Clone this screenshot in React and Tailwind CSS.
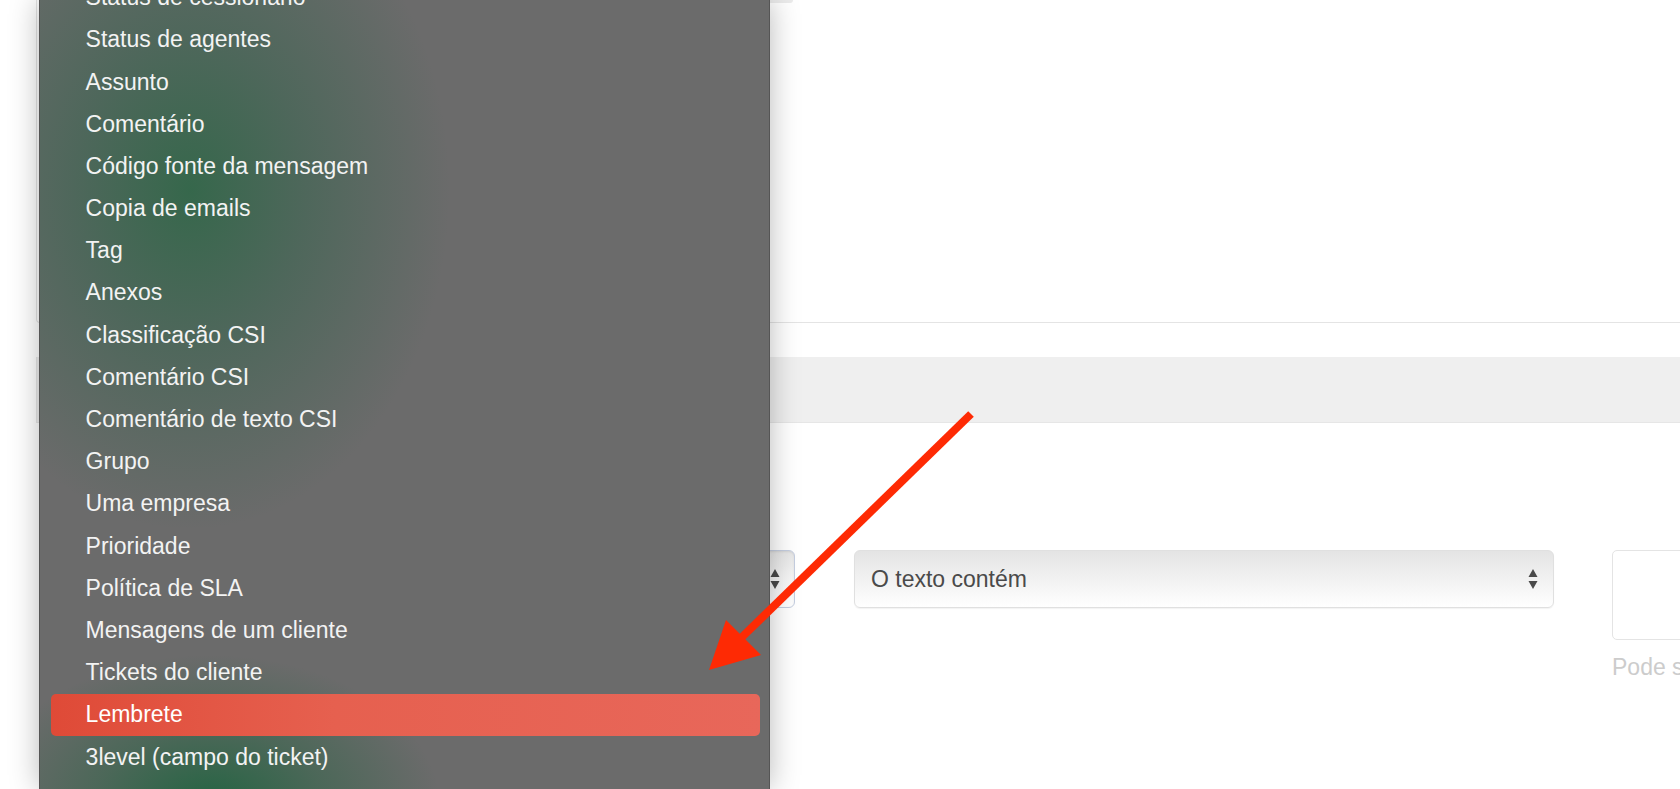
import React from "react";

const items = [
  "Status de cessionário",
  "Status de agentes",
  "Assunto",
  "Comentário",
  "Código fonte da mensagem",
  "Copia de emails",
  "Tag",
  "Anexos",
  "Classificação CSI",
  "Comentário CSI",
  "Comentário de texto CSI",
  "Grupo",
  "Uma empresa",
  "Prioridade",
  "Política de SLA",
  "Mensagens de um cliente",
  "Tickets do cliente",
  "Lembrete",
  "3level (campo do ticket)",
];

function Arrows() {
  return (
    <svg width="10" height="22" viewBox="0 0 10 22" className="shrink-0">
      <polygon points="5,1 9.5,9 0.5,9" fill="#4a4a4a" />
      <polygon points="0.5,13 9.5,13 5,21" fill="#4a4a4a" />
    </svg>
  );
}

export default function App() {
  return (
    <div className="relative w-[1680px] h-[789px] overflow-hidden bg-white font-['Liberation_Sans',Arial,sans-serif]">
      {/* background page */}
      <div className="ml-[36px] h-[323px] border-l border-b border-[#e4e4e4] rounded-bl-[4px] flex flex-col">
        <div className="ml-[30px] w-[726px] h-[3px] rounded-b-[4px] bg-[#ebebeb]" />
      </div>
      <div className="ml-[36px] mt-[34px] h-[66px] bg-[#efefef] border-l border-b border-[#e6e6e6]" />
      <div className="mt-[127px] ml-[60px] flex items-start w-[1900px]">
        <div className="shrink-0 w-[735px] h-[58px] rounded-[6px] border border-[#c5cee0] bg-linear-to-b from-[#e6e6e6] via-[#f6f6f6] to-white flex items-center justify-end pr-[14px] shadow-[inset_0_1px_2px_rgba(0,0,0,0.08)]">
          <Arrows />
        </div>
        <div className="shrink-0 ml-[59px] w-[700px] h-[58px] rounded-[6px] border border-[#e0e0e0] bg-linear-to-b from-[#e4e4e4] via-[#f4f4f4] via-60% to-white flex items-center justify-between pl-[16px] pr-[15px] shadow-[0_1px_1px_rgba(0,0,0,0.05)]">
          <span className="text-[23px] text-[#4a4a4a]">O texto contém</span>
          <Arrows />
        </div>
        <div className="shrink-0 ml-[58px] flex flex-col">
          <div className="w-[300px] h-[90px] rounded-[5px] border border-[#e4e4e4] bg-white" />
          <div className="mt-[14px] text-[23px] leading-[26px] text-[#cccccc] whitespace-nowrap">Pode ser separado por vírgula</div>
        </div>
      </div>

      {/* open dropdown menu */}
      <div className="absolute top-0 left-[39px] w-[731px] h-[789px] overflow-hidden border-x border-[#555555] bg-[#6b6b6b] bg-[image:radial-gradient(ellipse_260px_340px_at_150px_190px,rgba(48,103,72,0.9)_0%,rgba(55,100,78,0.55)_45%,rgba(80,105,95,0)_100%),radial-gradient(ellipse_230px_150px_at_170px_805px,rgba(32,100,64,0.95)_0%,rgba(45,100,70,0.5)_50%,rgba(60,100,80,0)_100%)] shadow-[0_0_28px_rgba(0,0,0,0.28)]">
        <div className="-mt-[23.7px] flex flex-col">
          {items.map((it) => {
            const active = it === "Lembrete";
            return (
              <div
                key={it}
                className={
                  active
                    ? "ml-[11px] mr-[9px] h-[42.2px] rounded-[5px] pl-[34.6px] flex items-center bg-linear-to-r from-[#df4a37] via-[#e6604f] via-40% to-[#e8675a] text-white text-[23px]"
                    : "ml-[11px] mr-[9px] h-[42.2px] pl-[34.6px] flex items-center text-[#f3f3f3] text-[23px]"
                }
              >
                {it}
              </div>
            );
          })}
        </div>
      </div>

      {/* red annotation arrow */}
      <svg className="absolute inset-0 pointer-events-none" width="1680" height="789" viewBox="0 0 1680 789">
        <line x1="971" y1="414" x2="738" y2="641" stroke="#fe2a04" strokeWidth="8" />
        <polygon points="709,670 726,620 761,655" fill="#fe2a04" />
      </svg>
    </div>
  );
}
